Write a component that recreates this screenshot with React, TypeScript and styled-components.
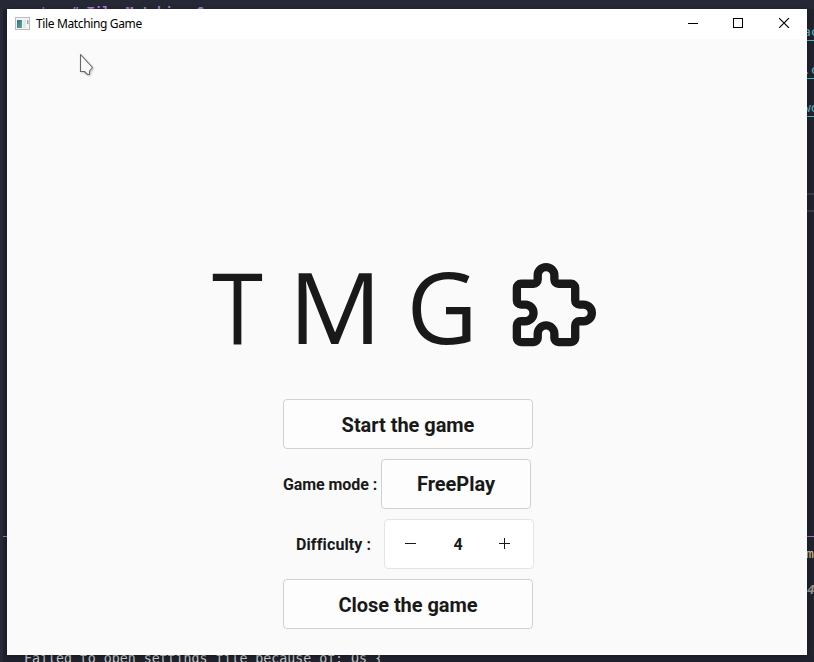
import React from "react";
import styled, { createGlobalStyle } from "styled-components";

const Global = createGlobalStyle`
  * { box-sizing: border-box; }
  html, body { margin: 0; padding: 0; }
  body { width: 814px; height: 662px; overflow: hidden; background: #21242f; }
`;

const Desktop = styled.div`
  position: relative;
  width: 814px;
  height: 662px;
  overflow: hidden;
  background: linear-gradient(90deg, #282b37 0 3px, #20232d 3px 7px, #20232d 100%);
`;

const TopShade = styled.div`
  position: relative;
  height: 9px;
  overflow: hidden;
  background: #262935;
`;

const CodeText = styled.span<{ $x: number; $y: number; $color: string; $size?: number; $bold?: boolean; $italic?: boolean }>`
  position: absolute;
  left: ${(p) => p.$x}px;
  top: ${(p) => p.$y}px;
  color: ${(p) => p.$color};
  font: ${(p) => (p.$italic ? "italic" : "normal")} ${(p) => (p.$bold ? 700 : 400)} ${(p) => p.$size ?? 13}px/16px "DejaVu Sans Mono", monospace;
  white-space: pre;
`;

const Rule = styled.div<{ $x: number; $y: number; $w: number; $color: string; $h?: number }>`
  position: absolute;
  left: ${(p) => p.$x}px;
  top: ${(p) => p.$y}px;
  width: ${(p) => p.$w}px;
  height: ${(p) => p.$h ?? 1}px;
  background: ${(p) => p.$color};
`;

const Window = styled.main`
  position: absolute;
  left: 7px;
  top: 9px;
  width: 800px;
  height: 646px;
  display: flex;
  flex-direction: column;
  background: #fafafa;
  color: #191919;
  box-shadow: 0 1px 5px rgba(0, 0, 0, 0.35);
`;

const TitleBar = styled.header`
  display: flex;
  align-items: center;
  height: 30px;
  padding-left: 8px;
  background: #fff;
`;

const TitleText = styled.span`
  flex: 1;
  margin-left: 6px;
  color: #000;
  font: 400 12px/16px "Noto Sans", sans-serif;
  letter-spacing: -0.36px;
`;

const Control = styled.span`
  display: flex;
  justify-content: center;
  width: 45px;
  padding-bottom: 2px;
  &:last-child { width: 46px; }
`;

const Content = styled.section`
  display: flex;
  flex-direction: column;
  align-items: center;
  padding-top: 216px;
`;

const Logo = styled.div`
  display: flex;
  width: 400px;
  height: 100px;
  margin-bottom: 44px;
`;

const LogoMark = styled.svg`
  flex: none;
  margin-left: -0.5px;
`;

const Letter = styled.span<{ $width: number; $shift: number; $stretch: number }>`
  flex: none;
  width: ${(p) => p.$width}px;
  font: 400 98px/100px "Open Sans", sans-serif;
  transform: translate(${(p) => p.$shift}px, 1px) scaleX(${(p) => p.$stretch});
  transform-origin: 0 0;
`;

const Menu = styled.div`
  display: flex;
  flex-direction: column;
  gap: 10px;
  width: 250px;
  margin-left: 2px;
`;

const Row = styled.div`
  display: flex;
  align-items: center;
  height: 50px;
`;

const Button = styled.button<{ $width: number; $drop?: number }>`
  flex: none;
  width: ${(p) => p.$width}px;
  height: 50px;
  padding: ${(p) => p.$drop ?? 0}px 0 0 0;
  border: 1px solid #d1d1d1;
  border-radius: 4px;
  background: #fdfdfd;
  color: #191919;
  font: 700 20px/24px Roboto, sans-serif;
  letter-spacing: -0.04px;
`;

const Label = styled.label<{ $width: number; $indent?: number; $spacing: number }>`
  flex: none;
  width: ${(p) => p.$width}px;
  padding: 2px 0 0 ${(p) => p.$indent ?? 0}px;
  font: 700 16px/20px Roboto, sans-serif;
  letter-spacing: ${(p) => p.$spacing}px;
  white-space: nowrap;
`;

const Stepper = styled.div`
  flex: none;
  display: grid;
  grid-template-columns: 52px 42px 52px;
  place-items: center;
  width: 150px;
  height: 50px;
  border: 1px solid #e5e5e5;
  border-radius: 4px;
  background: #fff;
  font: 700 16px/20px Roboto, sans-serif;
`;

const StepIcon = styled.svg`
  display: block;
  margin-bottom: 1px;
  margin-right: 1px;
`;

const Count = styled.span`
  padding-top: 2px;
`;

const AppMark = styled.svg`
  margin-bottom: 2px;
`;

const AppIcon = () => (
  <AppMark width="15" height="13" viewBox="0 0 15 13">
    <defs>
      <linearGradient id="screen" x1="0" y1="0" x2="1" y2="1">
        <stop offset="0" stopColor="#386ba0" />
        <stop offset="1" stopColor="#5bad7b" />
      </linearGradient>
    </defs>
    <rect x=".5" y=".5" width="14" height="12" fill="#f4f4f4" stroke="#b9bcc2" />
    <rect x="2" y="3" width="5" height="8" fill="url(#screen)" />
    <rect x="8" y="3" width="3" height="8" fill="#e3e6e4" />
    <rect x="12" y="3" width="1.5" height="4" fill="#8cb5b2" />
  </AppMark>
);

const PointerLayer = styled.svg`
  position: absolute;
  left: 71px;
  top: 43px;
  filter: drop-shadow(1px 1px 1px rgba(0, 0, 0, 0.22));
`;

export default function App() {
  return (
    <>
      <Global />
      <Desktop>
        <TopShade>
          <CodeText $x={40} $y={4} $color="#6b8fc4">t</CodeText>
          <CodeText $x={71} $y={4} $color="#a77bdc" $bold>{"# Tile Matching Game"}</CodeText>
        </TopShade>
        <CodeText $x={803} $y={24} $color="#55bad0">ac</CodeText>
        <CodeText $x={803} $y={62} $color="#55bad0">.c</CodeText>
        <CodeText $x={803} $y={100} $color="#55bad0">wo</CodeText>
        <Rule $x={807} $y={40} $w={7} $color="#47bdcc" />
        <Rule $x={807} $y={78} $w={7} $color="#47bdcc" />
        <Rule $x={807} $y={116} $w={7} $color="#47bdcc" />
        <Rule $x={807} $y={193} $w={7} $h={2} $color="#373d4d" />
        <Rule $x={807} $y={210} $w={7} $h={2} $color="#373d4d" />
        <Rule $x={3} $y={536} $w={811} $color="#a074cc" />
        <CodeText $x={806} $y={546} $color="#d7c7a1">m</CodeText>
        <CodeText $x={807} $y={582} $color="#929292" $bold $italic>4</CodeText>
        <CodeText $x={24} $y={651} $color="#c9cbcb" $size={13.25}>{"Failed to open settings file because of: Os {"}</CodeText>
        <Window>
          <TitleBar>
            <AppIcon />
            <TitleText>Tile Matching Game</TitleText>
            <Control>
              <svg width="11" height="10"><path d="M0 5.5H10" stroke="#000" /></svg>
            </Control>
            <Control>
              <svg width="11" height="10"><rect x=".5" y=".5" width="9" height="9" fill="none" stroke="#000" /></svg>
            </Control>
            <Control>
              <svg width="11" height="10"><path d="M0 0L10 10M10 0L0 10" stroke="#000" strokeWidth="1.1" /></svg>
            </Control>
          </TitleBar>
          <Content>
            <Logo>
              <Letter $width={83} $shift={5} $stretch={0.945}>T</Letter>
              <Letter $width={114} $shift={-1.5} $stretch={1.06}>M</Letter>
              <Letter $width={101} $shift={2.5} $stretch={1}>G</Letter>
              <LogoMark width="100" height="100" viewBox="0.15 0.1 24 24" fill="none" stroke="#191919" strokeWidth="2" strokeLinecap="round" strokeLinejoin="round">
                <path d="M4 7h3a1 1 0 0 0 1-1v-1a2 2 0 0 1 4 0v1a1 1 0 0 0 1 1h3a1 1 0 0 1 1 1v3a1 1 0 0 0 1 1h1a2 2 0 0 1 0 4h-1a1 1 0 0 0-1 1v3a1 1 0 0 1-1 1h-3a1 1 0 0 1-1-1v-1a2 2 0 0 0-4 0v1a1 1 0 0 1-1 1h-3a1 1 0 0 1-1-1v-3a1 1 0 0 1 1-1h1a2 2 0 0 0 0-4h-1a1 1 0 0 1-1-1v-3a1 1 0 0 1 1-1z" />
              </LogoMark>
            </Logo>
            <Menu>
              <Button $width={250} $drop={2}>Start the game</Button>
              <Row>
                <Label $width={98} $spacing={-0.08}>Game mode :</Label>
                <Button $width={150}>FreePlay</Button>
              </Row>
              <Row>
                <Label $width={101} $indent={13} $spacing={0.12}>Difficulty :</Label>
                <Stepper>
                  <StepIcon width="11" height="11"><path d="M0 5.5H11" stroke="#191919" /></StepIcon>
                  <Count>4</Count>
                  <StepIcon width="11" height="11"><path d="M0 5.5H11M5.5 0V11" stroke="#191919" /></StepIcon>
                </Stepper>
              </Row>
              <Button $width={250} $drop={2}>Close the game</Button>
            </Menu>
          </Content>
          <PointerLayer width="18" height="26" viewBox="0 0 18 26">
            <path d="M2.5 2.5V19.5H6.5L9.5 22.5H11.5V19L14.5 15.5Z" fill="#fafafa" stroke="#626a6c" strokeWidth="1.1" strokeLinejoin="round" />
          </PointerLayer>
        </Window>
      </Desktop>
    </>
  );
}
